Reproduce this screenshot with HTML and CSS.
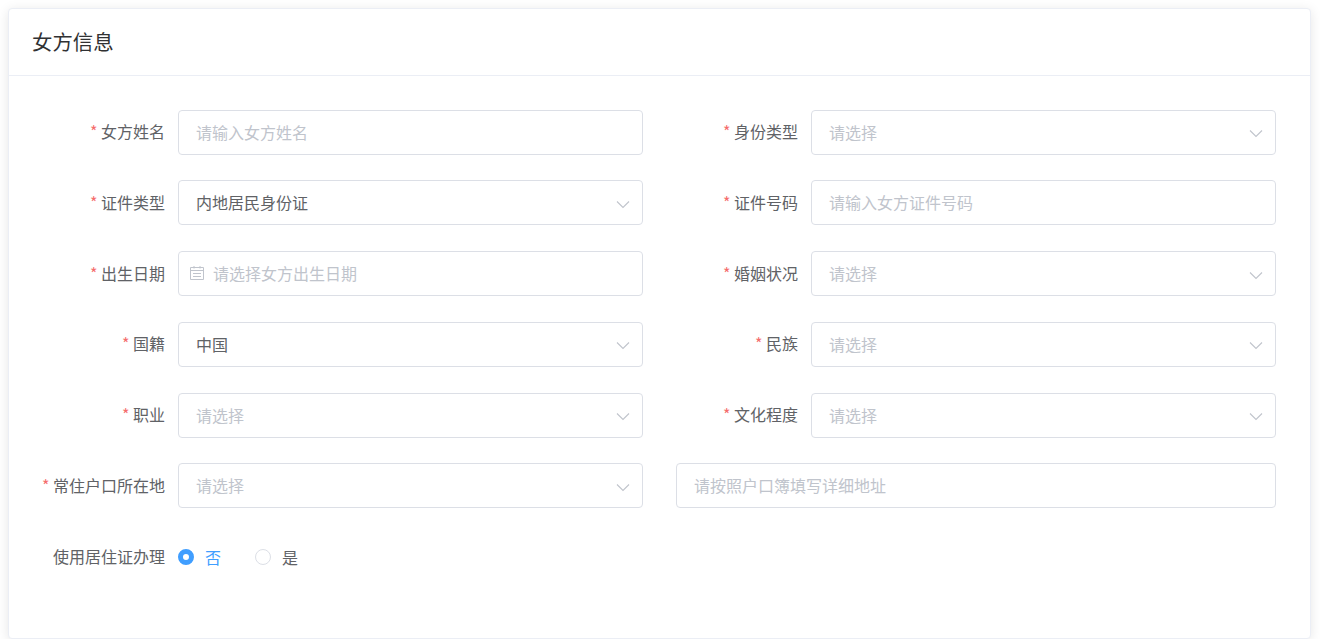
FILE: index.html
```html
<!DOCTYPE html>
<html lang="zh-CN">
<head>
<meta charset="utf-8">
<title>女方信息</title>
<link rel="stylesheet" href="styles.css">
</head>
<body>
<svg class="defs" width="0" height="0" aria-hidden="true">
  <symbol id="chev" viewBox="0 0 14 9"><path d="M1 1.5 7 7.5 13 1.5" fill="none" stroke="currentColor" stroke-width="1.1"/></symbol>
</svg>
<section class="card">
  <header class="card-head">女方信息</header>
  <form class="form">
    <div class="field"><label class="label"><i>*</i> 女方姓名</label><div class="box ph">请输入女方姓名</div></div>
    <div class="field"><label class="label"><i>*</i> 身份类型</label><div class="box ph">请选择<svg class="chev"><use href="#chev"/></svg></div></div>

    <div class="field"><label class="label"><i>*</i> 证件类型</label><div class="box">内地居民身份证<svg class="chev"><use href="#chev"/></svg></div></div>
    <div class="field"><label class="label"><i>*</i> 证件号码</label><div class="box ph">请输入女方证件号码</div></div>

    <div class="field"><label class="label"><i>*</i> 出生日期</label><div class="box ph date">
      <svg class="cal" viewBox="0 0 14 14"><path d="M.5 1.5h13v12H.5zM.5 4.5h13M3 7.5h8M3 10.5h8M4 0v2.5M10 0v2.5" fill="none" stroke="currentColor"/></svg>请选择女方出生日期</div></div>
    <div class="field"><label class="label"><i>*</i> 婚姻状况</label><div class="box ph">请选择<svg class="chev"><use href="#chev"/></svg></div></div>

    <div class="field"><label class="label"><i>*</i> 国籍</label><div class="box">中国<svg class="chev"><use href="#chev"/></svg></div></div>
    <div class="field"><label class="label"><i>*</i> 民族</label><div class="box ph">请选择<svg class="chev"><use href="#chev"/></svg></div></div>

    <div class="field"><label class="label"><i>*</i> 职业</label><div class="box ph">请选择<svg class="chev"><use href="#chev"/></svg></div></div>
    <div class="field"><label class="label"><i>*</i> 文化程度</label><div class="box ph">请选择<svg class="chev"><use href="#chev"/></svg></div></div>

    <div class="field"><label class="label"><i>*</i> 常住户口所在地</label><div class="box ph">请选择<svg class="chev"><use href="#chev"/></svg></div></div>
    <div class="field address"><div class="box ph">请按照户口簿填写详细地址</div></div>

    <div class="field radio-row"><label class="label">使用居住证办理</label>
      <div class="radios">
        <span class="radio on"><b></b>否</span>
        <span class="radio"><b></b>是</span>
      </div>
    </div>
  </form>
</section>
</body>
</html>
```
FILE: styles.css
```css
* { box-sizing: border-box; }
html, body { height: 100%; }
body {
  margin: 0;
  padding: 8px 9px 0 8px;
  background: #fff;
  overflow: hidden;
  font-family: "Noto Sans CJK SC", "Noto Sans", sans-serif;
  font-size: 16px;
  color: #606266;
}
.defs { position: absolute; }
.card {
  height: 631px;
  border: 1px solid #ebeef5;
  border-radius: 4px;
  background: #fff;
  box-shadow: 0 2px 12px rgba(0, 0, 0, 0.1);
  overflow: hidden;
}
.card-head {
  height: 67px;
  padding-left: 23px;
  border-bottom: 1px solid #ebeef5;
  font-size: 20.4px;
  line-height: 65px;
  color: #303133;
}
.form {
  display: grid;
  grid-template-columns: 633px 634px;
  grid-auto-rows: 45px;
  row-gap: 25.75px;
  padding: 33.6px 0 0 0;
}
.field { display: flex; align-items: center; }
.label {
  flex: 0 0 169px;
  padding-right: 13px;
  padding-bottom: 1px;
  text-align: right;
  white-space: nowrap;
  line-height: 43px;
}
.label i { font-style: normal; color: #f56c6c; }
.box {
  position: relative;
  display: flex;
  flex: none;
  align-items: center;
  width: 465px;
  height: 100%;
  padding: 0 0 1px 17px;
  border: 1px solid #dcdfe6;
  border-radius: 4px;
  color: #606266;
}
.box.ph { color: #c0c4cc; }
.box.date { padding-left: 11px; }
.chev {
  position: absolute;
  right: 12px;
  top: 18.5px;
  width: 14px;
  height: 9px;
  color: #c0c4cc;
}
.cal { width: 14px; height: 14px; margin-right: 9px; color: #c0c4cc; }
.address { padding-left: 34px; }
.address .box { width: 600px; }
.radio-row { grid-column: 1 / -1; }
.radios { display: flex; align-items: center; }
.radio { display: flex; align-items: center; width: 77px; color: #606266; }
.radio b {
  width: 16px;
  height: 16px;
  margin: 1px 11px 0 0;
  border: 1px solid #dcdfe6;
  border-radius: 50%;
  background: #fff;
}
.radio.on { color: #409eff; }
.radio.on b { border: 5px solid #409eff; }
```
